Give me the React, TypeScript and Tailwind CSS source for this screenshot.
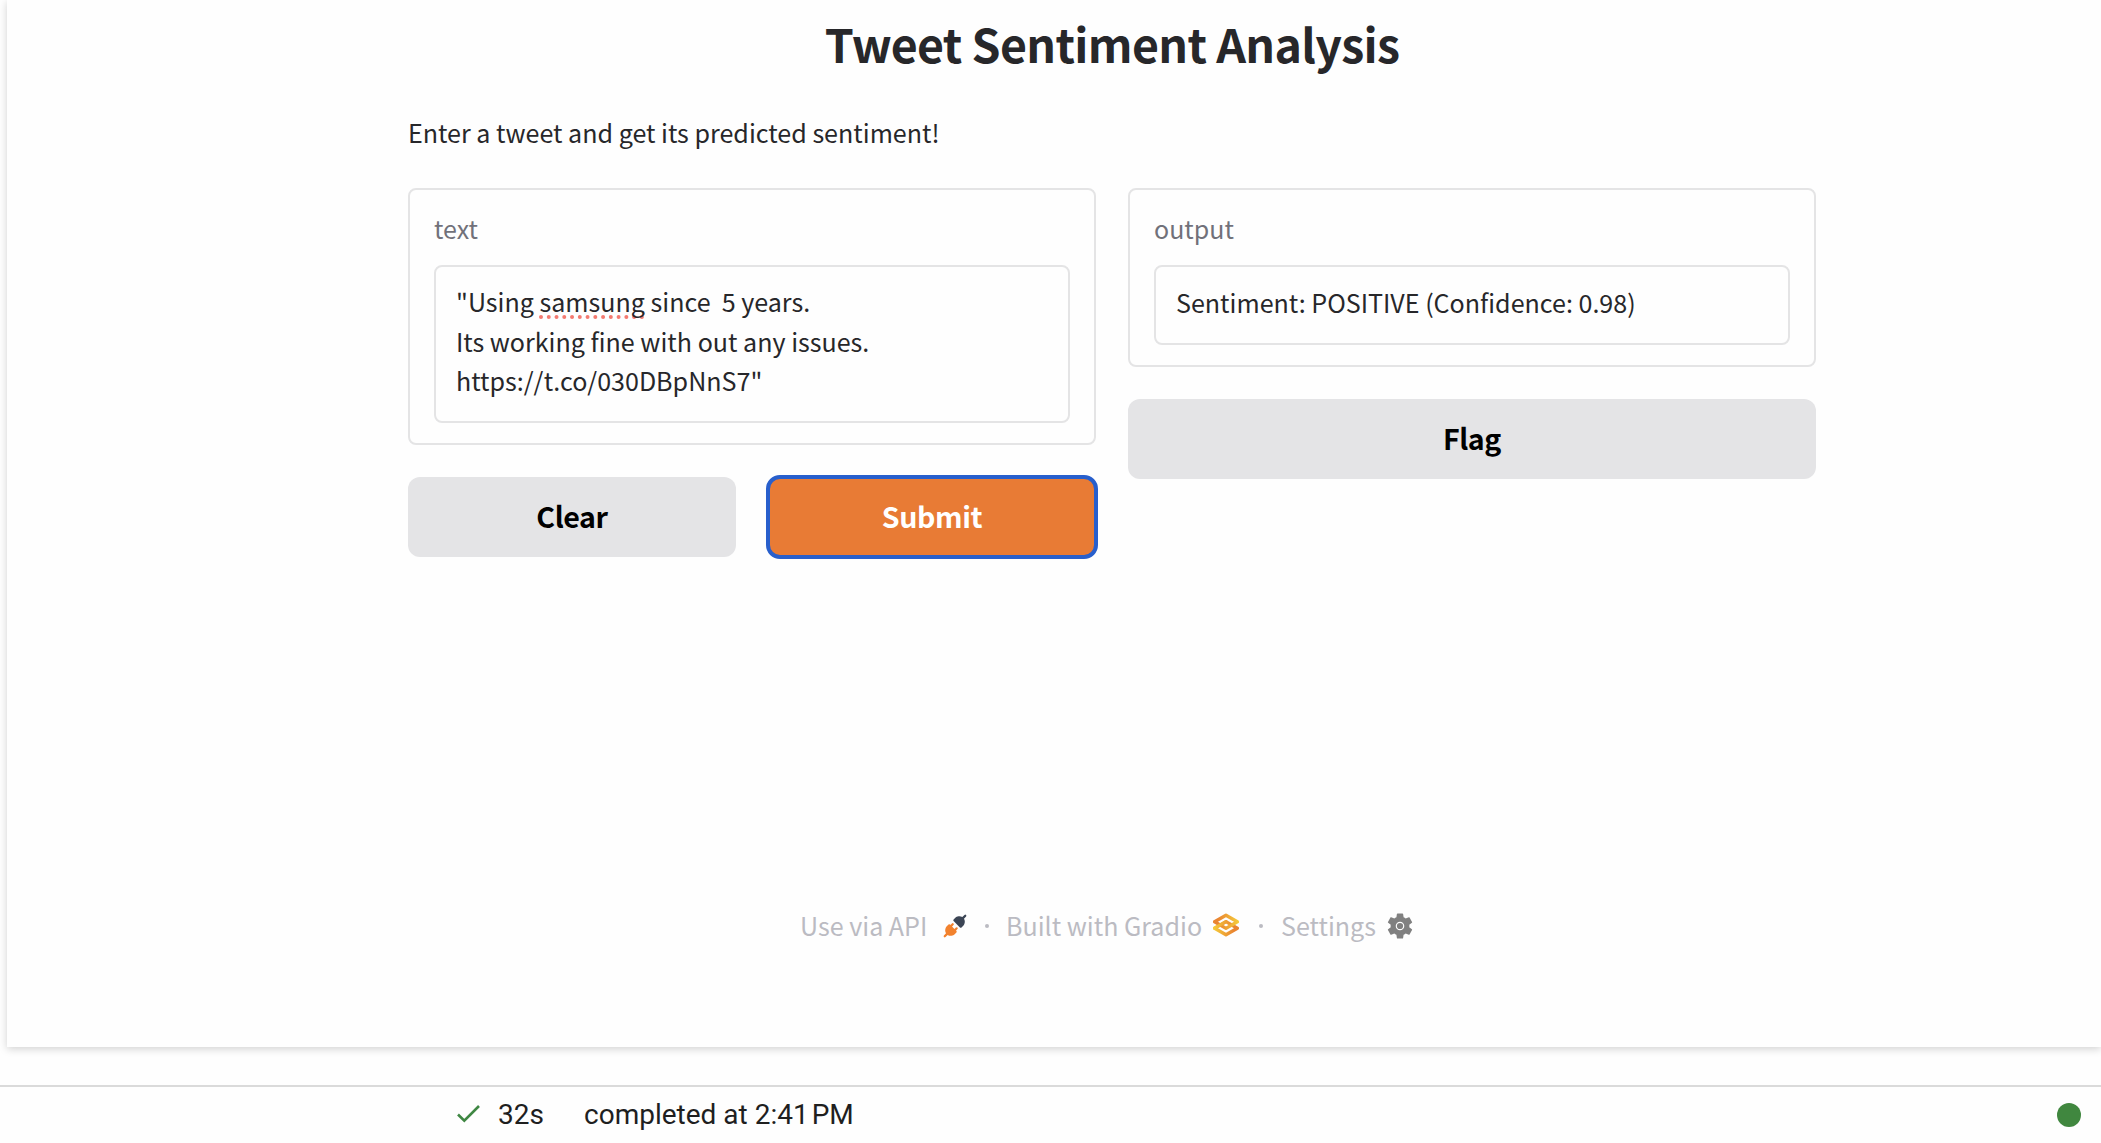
import type { ReactNode } from "react";

const sans = "font-['Noto_Sans_CJK_SC',sans-serif]";

function PlugIcon() {
  return (
    <svg className="h-6 w-6" viewBox="0 0 28 28" fill="none">
      <path
        fill="#3c4555"
        d="M26.94 2.94a1.333 1.333 0 0 0-1.88-1.88l-2.49 2.48c-1.45-.95-3.03-1.11-4.4-.9-1.62.25-3.06 1.03-3.78 1.75l-2 2a1.333 1.333 0 0 0 0 1.89l7.33 7.33c.52.52 1.37.52 1.89 0l2-2c.72-.72 1.5-2.16 1.75-3.79.21-1.36.05-2.94-.9-4.39l2.48-2.49Z"
      />
      <path
        fill="#f2822e"
        d="M12.28 12.94a1.333 1.333 0 0 0-1.89-1.88L8.67 12.78l-.39-.39a1.333 1.333 0 0 0-1.89 0l-2 2c-.72.72-1.5 2.16-1.75 3.79-.21 1.36-.05 2.94.9 4.39l-2.48 2.49a1.333 1.333 0 0 0 1.88 1.88l2.49-2.48c1.45.95 3.03 1.11 4.4.9 1.62-.25 3.06-1.03 3.78-1.75l2-2a1.333 1.333 0 0 0 0-1.89l-.39-.39 1.72-1.72a1.333 1.333 0 0 0-1.88-1.88l-1.73 1.72-2.78-2.78 1.73-1.73Z"
      />
    </svg>
  );
}

function GradioIcon() {
  return (
    <svg className="relative -top-px h-[26px] w-[26px]" viewBox="58 58 460 460" fill="none">
      <defs>
        <linearGradient id="lower" x1="60" y1="344" x2="429.5" y2="344" gradientUnits="userSpaceOnUse">
          <stop stopColor="#f5cd3b" />
          <stop offset="1" stopColor="#e98431" />
        </linearGradient>
        <linearGradient id="upper" x1="513.5" y1="231" x2="143.5" y2="231" gradientUnits="userSpaceOnUse">
          <stop stopColor="#f5cd3b" />
          <stop offset="1" stopColor="#e98431" />
        </linearGradient>
      </defs>
      <g strokeWidth="59" strokeLinejoin="round" strokeLinecap="round">
        <path d="M287.5 229 86 344.5 287.5 460 489 344.5Z" stroke="url(#lower)" />
        <path d="M287.5 116 86 231.5 287.5 347 489 231.5Z" stroke="url(#upper)" />
        <path d="M86 344 288 229" stroke="url(#lower)" />
      </g>
    </svg>
  );
}

function GearIcon() {
  return (
    <svg className="h-[26px] w-[26px]" viewBox="2 2 20 20" fill="#808080">
      <path
        fillRule="evenodd"
        d="M19.14 12.94c.04-.3.06-.61.06-.94 0-.32-.02-.64-.07-.94l2.03-1.58c.18-.14.23-.41.12-.61l-1.92-3.32c-.12-.22-.37-.29-.59-.22l-2.39.96c-.5-.38-1.03-.7-1.62-.94l-.36-2.54c-.04-.24-.24-.41-.48-.41h-3.84c-.24 0-.43.17-.47.41l-.36 2.54c-.59.24-1.13.57-1.62.94l-2.39-.96c-.22-.08-.47 0-.59.22L2.74 8.87c-.12.21-.08.47.12.61l2.03 1.58c-.05.3-.09.63-.09.94s.02.64.07.94l-2.03 1.58c-.18.14-.23.41-.12.61l1.92 3.32c.12.22.37.29.59.22l2.39-.96c.5.38 1.03.7 1.62.94l.36 2.54c.05.24.24.41.48.41h3.84c.24 0 .44-.17.47-.41l.36-2.54c.59-.24 1.13-.56 1.62-.94l2.39.96c.22.08.47 0 .59-.22l1.92-3.32c.12-.22.07-.47-.12-.61l-2.01-1.58zM12 15.3A3.3 3.3 0 1 1 12 8.7a3.3 3.3 0 0 1 0 6.6z"
      />
      <circle cx="12" cy="12" r="2.4" />
    </svg>
  );
}

function Field({ label, children }: { label: string; children: ReactNode }) {
  return (
    <div className="rounded-lg border-2 border-[#e4e4e5] px-6 pt-[17px] pb-5">
      <div className="h-[58px] text-[25px] leading-[42px] text-[#71717a]">{label}</div>
      <div className="rounded-lg border-2 border-[#e4e4e5] px-5 text-[25.07px] leading-[39.5px] whitespace-pre text-[#27272a]">
        {children}
      </div>
    </div>
  );
}

function Separator({ className }: { className: string }) {
  return (
    <span className={`flex justify-center ${className}`}>
      <span className="h-1 w-1 rounded-full bg-[#bbbbc2]" />
    </span>
  );
}

const button =
  "flex h-20 flex-1 items-center justify-center rounded-xl pb-px text-[28.6px] leading-none font-bold tracking-[-0.4px]";

export default function App() {
  return (
    <div className="flex h-[1143px] w-[2101px] flex-col overflow-hidden bg-[#fefefe]">
      <main
        className={`ml-[7px] flex h-[1047px] shrink-0 flex-col bg-[#fefefe] pl-[401px] shadow-[0_2px_8px_rgba(0,0,0,0.18)] ${sans}`}
      >
        <div className="flex h-[1047px] w-[1408px] flex-col">
          <h1 className="h-[106px] text-center text-[46.5px] leading-[86px] font-bold tracking-[-0.68px] text-[#27272a]">
            Tweet Sentiment Analysis
          </h1>
          <p className="h-[82px] text-[25.07px] leading-[52px] text-[#27272a]">
            Enter a tweet and get its predicted sentiment!
          </p>
          <div className="grid grid-cols-2 items-start gap-8">
            <section className="flex flex-col gap-8">
              <Field label="text">
                <div className="h-[154px] pt-[15px]">
                  <div className="flex">
                    <span>{'"Using '}</span>
                    <span className="underline decoration-[#f47a70] decoration-dotted decoration-[4px] underline-offset-[3px] [text-decoration-skip-ink:none]">
                      samsung
                    </span>
                    <span>{" since  5 years."}</span>
                  </div>
                  <div>Its working fine with out any issues.</div>
                  <div>https://t.co/030DBpNnS7"</div>
                </div>
              </Field>
              <div className="flex gap-8">
                <button className={`${button} bg-[#e4e4e6] text-black`}>Clear</button>
                <button
                  className={`${button} bg-[#e87b35] text-white outline-4 -outline-offset-2 outline-[#285fcc]`}
                >
                  Submit
                </button>
              </div>
            </section>
            <section className="flex flex-col gap-8">
              <Field label="output">
                <div className="h-[76px] pt-4">Sentiment: POSITIVE (Confidence: 0.98)</div>
              </Field>
              <div className="flex">
                <button className={`${button} bg-[#e4e4e6] text-black`}>Flag</button>
              </div>
            </section>
          </div>
          <footer className="mt-auto mb-[101px] ml-[392px] flex h-10 items-center text-[25.07px] leading-10 whitespace-nowrap text-[#bbbbc2]">
            <span className="w-[143px] pb-0.5">Use via API</span>
            <PlugIcon />
            <Separator className="w-[39px]" />
            <span className="w-[207px] pb-0.5">Built with Gradio</span>
            <GradioIcon />
            <Separator className="w-[42px] pl-0.5" />
            <span className="w-[106px] pb-0.5">Settings</span>
            <GearIcon />
          </footer>
        </div>
      </main>
      <div className="mt-[38px] flex flex-1 items-start border-t-2 border-[#dadada] pr-5 pl-[456px] font-[Roboto,sans-serif] text-[28px] leading-[56px] text-[#1f1f1f]">
        <svg className="mt-[17px] h-5 w-[25px]" viewBox="0 0 25 20" fill="none">
          <path d="m2 10.5 6.3 6.2L23 2" stroke="#3f8743" strokeWidth="2.6" />
        </svg>
        <span className="ml-[17px] w-[86px]">32s</span>
        <span className="flex gap-[3px]">
          <span>completed at 2:41</span>
          <span>PM</span>
        </span>
        <span className="mt-4 ml-auto h-6 w-6 rounded-full bg-[#40873f]" />
      </div>
    </div>
  );
}
